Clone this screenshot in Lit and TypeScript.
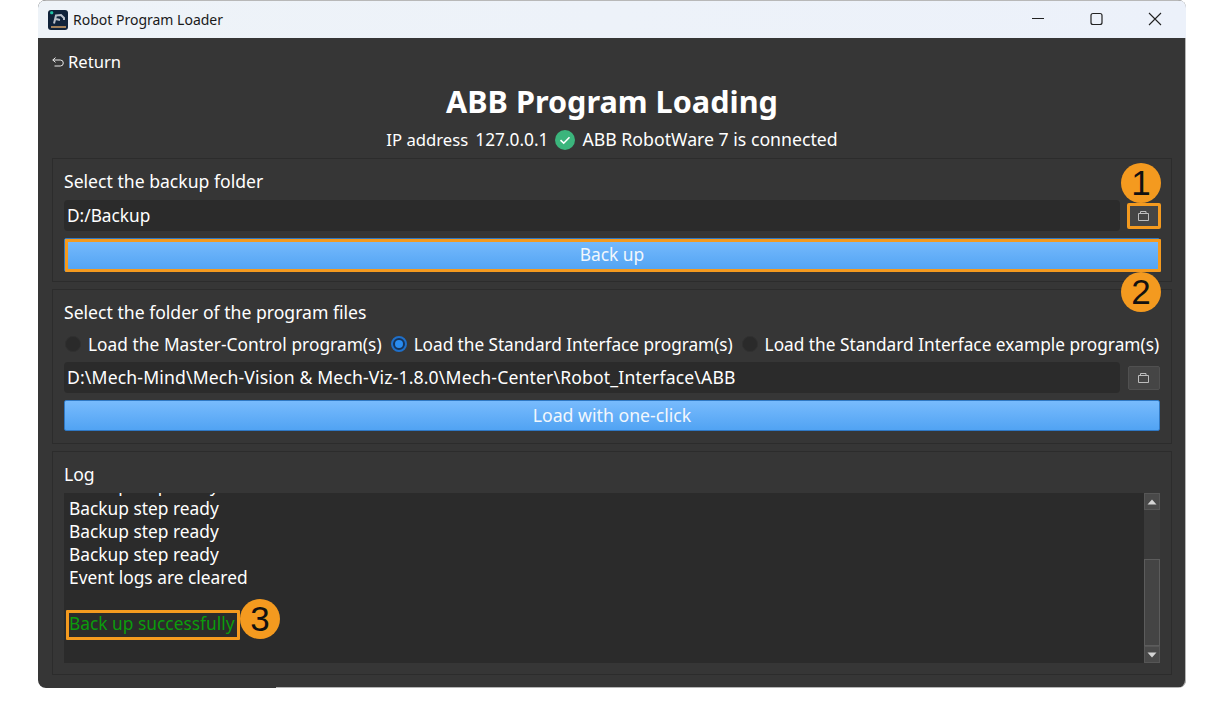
import { LitElement, html, css } from "lit";
import { customElement } from "lit/decorators.js";

const folder = html`<svg class="fi" width="11" height="10" viewBox="0 0 11 10" fill="none" stroke="#bdbdbd" stroke-width="1"><path d="M2.5 2V.5h5.5V2"/><path d="M.5 2.5h10v7H.5z"/></svg>`;

@customElement("app-root")
export class AppRoot extends LitElement {
  static styles = css`
    :host { display: block; width: 1226px; height: 714px; background: #fff; overflow: hidden; position: relative;
      font-family: "Noto Sans", "Open Sans", sans-serif; color: #fff; }
    * { box-sizing: border-box; }
    .window { margin-left: 38px; width: 1148px; height: 688px; border-radius: 8px;
      background: linear-gradient(#b5b5b5, #b5b5b5) no-repeat 238px 100% / 100% 1px, #363636;
      display: flex; flex-direction: column; overflow: hidden; box-shadow: inset -1px 0 0 #b5b5b5; }
    .titlebar { height: 38px; flex: none; background: linear-gradient(90deg, #eef3f8, #ecf1fa); border-top: 1px solid #b8b8b8;
      display: flex; align-items: center; padding-left: 10px; color: #1a1a1a; font-size: 14px; }
    .logo { width: 20px; height: 20px; margin-right: 5px; flex: none; display: block; }
    .winbtns { margin-left: auto; display: flex; }
    .winbtns svg { display: block; width: 59px; height: 37px; }
    .body { flex: 1; display: flex; flex-direction: column; padding: 0 14px; }
    .return { height: 20px; margin-top: 13px; display: flex; align-items: center; gap: 4px; font-size: 16.6px; }
    .return svg { margin-top: 2px; }
    h1 { margin: 8px 0 0; height: 44px; line-height: 44px; text-align: center; font-size: 30.6px; font-weight: 700; }
    .status { margin-top: 5px; height: 23px; display: flex; justify-content: center; align-items: center; font-size: 17.3px; white-space: nowrap; }
    .status .ip { margin-right: 7px; }
    .status .ipl { font-size: 16.7px; }
    .status .conn { font-size: 17.7px; line-height: 21px; }
    .status svg { margin-right: 7px; display: block; }
    .group { border: 1px solid #2c2c2c; padding: 0 11px; display: flex; flex-direction: column; }
    .g1 { margin-top: 7px; height: 124px; }
    .g2 { margin-top: 7px; height: 155px; }
    .g3 { margin-top: 7px; height: 224px; }
    .label { font-size: 17.6px; height: 24px; line-height: 22px; margin-top: 11px; white-space: nowrap; }
    .g3 .label { margin-top: 10px; line-height: 24px; }
    .row { display: flex; gap: 8px; align-items: center; }
    .g1 .row { margin-top: 6px; }
    .input { flex: 1; height: 31px; background: #2b2b2b; border-radius: 4px; padding-left: 3px; font-size: 17.25px; line-height: 31px; white-space: nowrap; }
    .path { font-size: 17.6px; letter-spacing: 0.15px; }
    .fbtn { width: 32px; height: 24px; background: #454545; display: flex; align-items: center; justify-content: center; border: 1px solid #505050; border-radius: 2px; }
    .fi { margin-right: 2px; }
    .fbtn.hl { border: none; outline: 3px solid #f49a1f; outline-offset: -2px; border-radius: 1px; }
    .btn { height: 31px; border-radius: 2px; background: linear-gradient(180deg, #78bbfd, #51a3f3); border: 1px solid #2f78c4;
      text-align: center; line-height: 29px; color: #f2f7fc; white-space: nowrap; }
    .g1 .btn { margin-top: 7px; height: 34px; line-height: 30px; font-size: 17.4px; position: relative; }
    .g1 .btn::after { content: ""; position: absolute; left: 0; top: 0; right: -2px; bottom: -1px; border: 3px solid #f49a1f; border-radius: 1px; }
    .g2 .btn { margin-top: 7px; font-size: 17.7px; }
    .radios { margin-top: 7px; height: 24px; display: flex; align-items: center; font-size: 17.25px; white-space: nowrap; }
    .radio { width: 16px; height: 16px; border-radius: 50%; background: #2a2a2a; margin: 0 7px 0 1px; flex: none; border: 1px solid #303030; }
    .radio.on { background: #16345a; border: 2px solid #1f6fc9; display: flex; align-items: center; justify-content: center; }
    .radio.on::after { content: ""; width: 8px; height: 8px; border-radius: 50%; background: #2a8cf0; }
    .item { margin-right: 8px; }
    .i1 { letter-spacing: 0.06px; }
    .i2 { letter-spacing: -0.05px; }
    .g2 .row { margin-top: 6px; }
    .log { margin-top: 7px; height: 170px; background: #2b2b2b; display: flex; width: 1096px; overflow: hidden; }
    .lines { flex: 1; display: flex; flex-direction: column; justify-content: flex-end; padding: 0 0 28px 5px; font-size: 17.35px; line-height: 23px; overflow: hidden; }
    .lines div { flex: none; height: 23px; white-space: nowrap; }
    .ok { color: #0b9c0b; display: inline-block; height: 23px; position: relative; }
    .ok::after { content: ""; position: absolute; left: -3px; right: -5px; top: -2px; bottom: -5px; border: 3px solid #f49a1f; border-radius: 1px; }
    .sb { width: 16px; flex: none; display: flex; flex-direction: column; background: #3a3a3a; }
    .sb .arrow { height: 17px; flex: none; background: #494949; border: 1px solid #565656; display: flex; align-items: center; justify-content: center; }
    .sb .track { flex: 1; }
    .sb .thumb { height: 87px; flex: none; background: #444; border: 1px solid #5c5c5c; }
    .badge { position: absolute; width: 40px; height: 40px; border-radius: 50%; background: #f49a1f; color: #111;
      font-family: "Liberation Sans", Arial, sans-serif; font-size: 35px; display: flex; align-items: center; justify-content: center; }
    .b1 { left: 1121px; top: 163px; }
    .b2 { left: 1121px; top: 272px; }
    .b3 { left: 240px; top: 599px; }
  `;

  render() {
    return html`
      <div class="window">
        <div class="titlebar">
          <svg class="logo" viewBox="0 0 20 20">
            <rect width="20" height="20" rx="3" fill="#10233a"/>
            <rect x="2.2" y="1.2" width="3" height="3" rx="1" fill="#1fc4a8"/>
            <path d="M6 13.5l2-8 5-.5 3 3v2M8 9l4 1" stroke="#b9c0ca" stroke-width="2" fill="none"/>
            <rect x="3" y="16.3" width="15" height="1.4" fill="#e0a868"/>
          </svg>
          <span>Robot Program Loader</span>
          <div class="winbtns">
            <svg viewBox="0 0 59 37"><path d="M23 17.5h12" stroke="#222" stroke-width="1"/></svg>
            <svg viewBox="0 0 59 37"><rect x="23" y="12.5" width="11" height="11" rx="2" fill="none" stroke="#222" stroke-width="1.2"/></svg>
            <svg viewBox="0 0 59 37"><path d="M22 12l12 12M34 12L22 24" stroke="#222" stroke-width="1.1"/></svg>
          </div>
        </div>
        <div class="body">
          <div class="return">
            <svg width="12" height="10" viewBox="0 0 12 10" fill="none" stroke="#e8e8e8" stroke-width="1"><path d="M3.5 .6L.8 3l2.7 2.4M.8 3h7.5a2.9 2.9 0 0 1 0 6H2.5"/></svg>
            <span>Return</span>
          </div>
          <h1>ABB Program Loading</h1>
          <div class="status">
            <span class="ip ipl">IP address</span><span class="ip">127.0.0.1</span>
            <svg width="20" height="20" viewBox="0 0 20 20"><circle cx="10" cy="10" r="10" fill="#3bb57c"/><path d="M5.5 10.2l3.2 3 5.8-6" stroke="#fff" stroke-width="1.6" fill="none"/></svg>
            <span class="conn">ABB RobotWare 7 is connected</span>
          </div>
          <section class="group g1">
            <div class="label">Select the backup folder</div>
            <div class="row"><div class="input">D:/Backup</div><div class="fbtn hl">${folder}</div></div>
            <div class="btn">Back up</div>
          </section>
          <section class="group g2">
            <div class="label">Select the folder of the program files</div>
            <div class="radios">
              <span class="radio"></span><span class="item i1">Load the Master-Control program(s)</span>
              <span class="radio on"></span><span class="item i2">Load the Standard Interface program(s)</span>
              <span class="radio"></span><span>Load the Standard Interface example program(s)</span>
            </div>
            <div class="row"><div class="input path">D:\\Mech-Mind\\Mech-Vision &amp; Mech-Viz-1.8.0\\Mech-Center\\Robot_Interface\\ABB</div><div class="fbtn">${folder}</div></div>
            <div class="btn">Load with one-click</div>
          </section>
          <section class="group g3">
            <div class="label">Log</div>
            <div class="log">
              <div class="lines">
                <div>Backup step ready</div>
                <div>Backup step ready</div>
                <div>Backup step ready</div>
                <div>Backup step ready</div>
                <div>Event logs are cleared</div>
                <div></div>
                <div><span class="ok">Back up successfully</span></div>
              </div>
              <div class="sb">
                <div class="arrow"><svg width="10" height="6" viewBox="0 0 10 6"><path d="M5 0.5L9.5 5.5H0.5z" fill="#d5d5d5"/></svg></div>
                <div class="track"></div>
                <div class="thumb"></div>
                <div class="arrow"><svg width="10" height="6" viewBox="0 0 10 6"><path d="M5 5.5L9.5 0.5H0.5z" fill="#d5d5d5"/></svg></div>
              </div>
            </div>
          </section>
        </div>
      </div>
      <div class="badge b1">1</div>
      <div class="badge b2">2</div>
      <div class="badge b3">3</div>
    `;
  }
}
